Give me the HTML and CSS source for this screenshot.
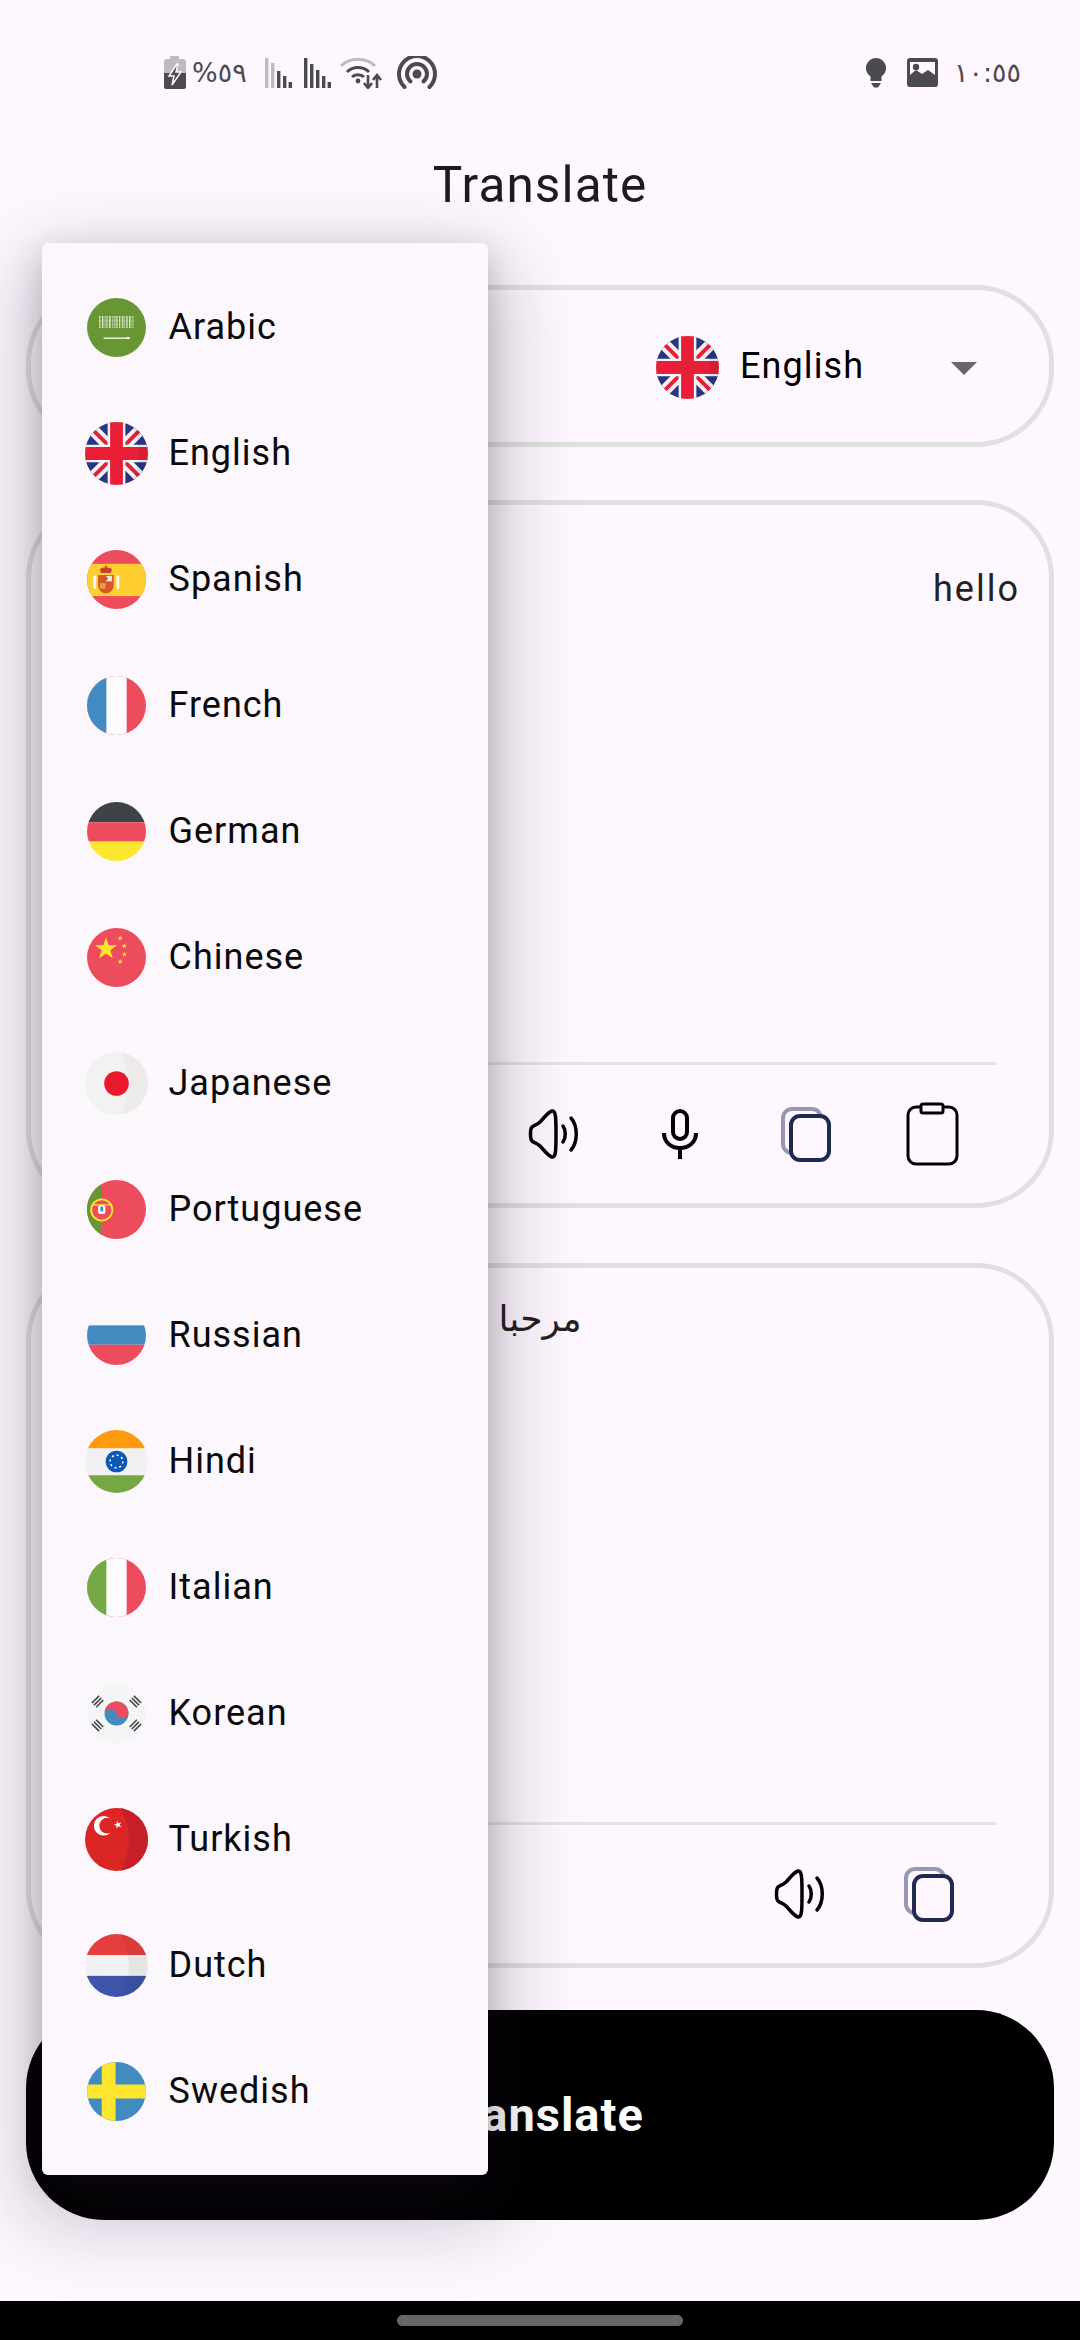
FILE: index.html
```html
<!DOCTYPE html>
<html lang="en">
<head>
<meta charset="utf-8">
<title>Translate</title>
<link rel="stylesheet" href="styles.css">
</head>
<body>
<div class="screen">
  <header class="status">
    <div class="status-group">
      <svg class="si battery" viewBox="0 0 22 33"><path class="g-light" d="M6 0h9v3h4a3 3 0 0 1 3 3v12H0V6a3 3 0 0 1 3-3h3z"/><path class="g-dark" d="M0 17h22v14a2 2 0 0 1-2 2H2a2 2 0 0 1-2-2z"/><path d="M13 8 5 20h5l-2 9 9-13h-5l2-8z" fill="#4b4a4c" stroke="#fef7ff" stroke-width="1.5"/></svg>
      <span class="st-text pct">%٥٩</span>
      <svg class="si signal first" viewBox="0 0 27 30"><rect class="g-light" x="0" y="0" width="3.4" height="30"/><rect class="g-light" x="6" y="5" width="3.4" height="25"/><rect class="g-dark" x="12" y="13" width="3.4" height="17"/><rect class="g-dark" x="18" y="18" width="3.4" height="12"/><rect class="g-dark" x="23.6" y="24" width="3.4" height="6"/></svg>
      <svg class="si signal" viewBox="0 0 27 30"><rect class="g-dark" x="0" y="0" width="3.4" height="30"/><rect class="g-dark" x="6" y="6" width="3.4" height="24"/><rect class="g-dark" x="12" y="12" width="3.4" height="18"/><rect class="g-dark" x="18" y="18" width="3.4" height="12"/><rect class="g-dark" x="23.6" y="24" width="3.4" height="6"/></svg>
      <svg class="si wifi" viewBox="0 0 42 32"><path d="M1 9C10 0 26 0 35 9" fill="none" stroke="#bdbbbe" stroke-width="3"/><path d="M7 15C13 9 23 9 29 15" fill="none" stroke="#4b4a4c" stroke-width="3"/><path d="M12 20C15 17 21 17 24 20" fill="none" stroke="#4b4a4c" stroke-width="3"/><circle cx="18" cy="24" r="2.4" fill="#4b4a4c"/><path d="M28 18v12M24 26l4 5 4-5" fill="none" stroke="#4b4a4c" stroke-width="2.6"/><path d="M37 31V19M33 23l4-5 4 5" fill="none" stroke="#4b4a4c" stroke-width="2.6"/></svg>
      <svg class="si hotspot" viewBox="0 0 40 33"><circle cx="20" cy="18" r="4.500" fill="#4b4a4c"/><path d="M13.500 25.500A10 10 0 1 1 26.500 25.500" fill="none" stroke="#4b4a4c" stroke-width="4" stroke-linecap="round"/><path d="M7.500 31A18 18 0 1 1 32.500 31" fill="none" stroke="#4b4a4c" stroke-width="4" stroke-linecap="round"/></svg>
    </div>
    <div class="status-group right">
      <svg class="si bulb" viewBox="0 0 20 30"><path class="g-dark" d="M10 0a10 10 0 0 1 5.5 18.4V23h-11v-4.600A10 10 0 0 1 10 0z"/><path class="g-dark" d="M5 25h10l-3 4.500H8z"/></svg>
      <svg class="si picture" viewBox="0 0 31 29"><path class="g-dark" fill-rule="evenodd" d="M3 0h25a3 3 0 0 1 3 3v23a3 3 0 0 1-3 3H3a3 3 0 0 1-3-3V3a3 3 0 0 1 3-3zM3 4v13l6-5 6 4 6-4 7 5V4z"/><circle cx="9" cy="9" r="3.200" fill="#4b4a4c"/></svg>
      <span class="st-text time">١٠:٥٥</span>
    </div>
  </header>

  <main class="app">
    <h1 class="title">Translate</h1>

    <section class="selector">
      <div class="lang-pick">
        <svg class="flag big" viewBox="0 0 64 64"><rect width="64" height="64" fill="#2a3580"/><path d="M0 0 64 64M64 0 0 64" stroke="#f4f4f4" stroke-width="12"/><path d="M0 0 64 64M64 0 0 64" stroke="#e81f37" stroke-width="4"/><path d="M32 0V64M0 32H64" stroke="#f4f4f4" stroke-width="18"/><path d="M32 0V64M0 32H64" stroke="#e81f37" stroke-width="13"/><path d="M46 0a64 64 0 0 1 0 64h18V0z" fill="#000" opacity=".07"/></svg>
        <span class="lang-name">English</span>
        <span class="caret"></span>
      </div>
    </section>

    <section class="card source">
      <p class="input-text">hello</p>
      <div class="rule"></div>
      <div class="tools">
        <span class="slot"><svg class="ic speaker" viewBox="0 0 52 50"><path d="M24 2C20 3 16 9 12 13 9 16 6 16 4 18 2 20 2 30 4 32 6 34 9 34 12 37 16 41 20 47 24 48 28 49 28 40 28 25 28 10 28 1 24 2Z"/><path d="M35 17C38 21 38 29 35 33M43 9C50 17 50 33 43 41"/></svg></span>
        <span class="slot"><svg class="ic mic" viewBox="0 0 36 50"><rect x="11" y="2" width="14" height="28" rx="7"/><path class="butt" d="M2 24C2 44 34 44 34 24M18 38V50"/></svg></span>
        <span class="slot"><svg class="ic copy" viewBox="0 0 50 55"><rect class="copy-back" x="2" y="2" width="38" height="44" rx="9"/><rect class="copy-front" x="10" y="9" width="38" height="44" rx="9"/></svg></span>
        <span class="slot"><svg class="ic clip" viewBox="0 0 53 64"><rect class="thin" x="2" y="5" width="49" height="57" rx="8"/><rect class="thin tab" x="15" y="2" width="22" height="9" rx="2"/></svg></span>
      </div>
    </section>

    <section class="card result">
      <p class="output-text" lang="ar">مرحبا</p>
      <div class="rule"></div>
      <div class="tools compact">
        <span class="slot"><svg class="ic speaker" viewBox="0 0 52 50"><path d="M24 2C20 3 16 9 12 13 9 16 6 16 4 18 2 20 2 30 4 32 6 34 9 34 12 37 16 41 20 47 24 48 28 49 28 40 28 25 28 10 28 1 24 2Z"/><path d="M35 17C38 21 38 29 35 33M43 9C50 17 50 33 43 41"/></svg></span>
        <span class="slot"><svg class="ic copy" viewBox="0 0 50 55"><rect class="copy-back" x="2" y="2" width="38" height="44" rx="9"/><rect class="copy-front" x="10" y="9" width="38" height="44" rx="9"/></svg></span>
      </div>
    </section>

    <button class="translate">Translate</button>
  </main>

  <footer class="navbar"><span class="pill"></span></footer>

  <ul class="menu">
    <li class="row">
      <svg class="flag" viewBox="0 0 64 64"><rect width="64" height="64" fill="#699635"/><path d="M13 26H51" stroke="#fff" stroke-width="13" stroke-dasharray=".8 .9 .5 1.300 1 .7 .6 1.500"/><path d="M13 22.500H51M13 27H51M13 30.500H51" stroke="#699635" stroke-width=".8" stroke-dasharray="3 1.500 2 2.500"/><path d="M18 43.500H44" stroke="#fff" stroke-width="1.300"/><path d="M43 42.200h2.500l1.500 1.300-1.500 1.300H43z" fill="#fff"/></svg>
      <span class="lang">Arabic</span>
    </li>
    <li class="row">
      <svg class="flag big" viewBox="0 0 64 64"><rect width="64" height="64" fill="#2a3580"/><path d="M0 0 64 64M64 0 0 64" stroke="#f4f4f4" stroke-width="12"/><path d="M0 0 64 64M64 0 0 64" stroke="#e81f37" stroke-width="4"/><path d="M32 0V64M0 32H64" stroke="#f4f4f4" stroke-width="18"/><path d="M32 0V64M0 32H64" stroke="#e81f37" stroke-width="13"/><path d="M46 0a64 64 0 0 1 0 64h18V0z" fill="#000" opacity=".07"/></svg>
      <span class="lang">English</span>
    </li>
    <li class="row">
      <svg class="flag" viewBox="0 0 64 64"><rect width="64" height="64" fill="#ed4c5c"/><rect y="15" width="64" height="35" fill="#ffce31"/><rect x="7" y="28" width="3" height="14" fill="#fff"/><rect x="32" y="28" width="3" height="14" fill="#fff"/><path d="M14 21c2-3 11-3 13 0l-1 4H15z" fill="#c8412f"/><circle cx="20.500" cy="18" r="1.200" fill="#c8412f"/><path d="M12 27H29V38C29 43 25 47 20.500 47S12 43 12 38z" fill="#d9582b"/><rect x="21" y="28" width="6" height="6" fill="#f4ecd8"/><rect x="14" y="36" width="6" height="6" fill="#e8a13a"/><circle cx="21" cy="31" r="1.500" fill="#c8412f"/></svg>
      <span class="lang">Spanish</span>
    </li>
    <li class="row">
      <svg class="flag" viewBox="0 0 64 64"><rect width="64" height="64" fill="#ed4c5c"/><rect width="43" height="64" fill="#fcfcfc"/><rect width="21" height="64" fill="#428bc1"/></svg>
      <span class="lang">French</span>
    </li>
    <li class="row">
      <svg class="flag" viewBox="0 0 64 64"><rect width="64" height="22" fill="#3e4347"/><rect y="22" width="64" height="21" fill="#ed4c5c"/><rect y="43" width="64" height="21" fill="#ffe62e"/></svg>
      <span class="lang">German</span>
    </li>
    <li class="row">
      <svg class="flag" viewBox="0 0 64 64"><defs><polygon id="star" points="0,-10 2.350,-3.240 9.510,-3.090 3.800,1.240 5.880,8.090 0,4 -5.880,8.090 -3.800,1.240 -9.510,-3.090 -2.350,-3.240"/></defs><rect width="64" height="64" fill="#ed4c5c"/><g fill="#ffe62e"><use href="#star" transform="translate(20.600 22.700) scale(1.250)"/><use href="#star" transform="translate(36 11) scale(.3)"/><use href="#star" transform="translate(40.500 19.500) scale(.3)"/><use href="#star" transform="translate(40.500 28.500) scale(.3)"/><use href="#star" transform="translate(36 36.500) scale(.3)"/></g></svg>
      <span class="lang">Chinese</span>
    </li>
    <li class="row">
      <svg class="flag big" viewBox="0 0 64 64"><rect width="64" height="64" fill="#f2f2f2"/><path d="M36 0a64 64 0 0 1 0 64h28V0z" fill="#ecebe9"/><circle cx="32" cy="32" r="12.500" fill="#e8192c"/></svg>
      <span class="lang">Japanese</span>
    </li>
    <li class="row">
      <svg class="flag" viewBox="0 0 64 64"><rect width="64" height="64" fill="#ed4c5c"/><rect width="15.500" height="64" fill="#699635"/><circle cx="16" cy="32.500" r="11.500" fill="#ed4c5c" stroke="#ffe62e" stroke-width="2"/><path d="M6 27H26" stroke="#ffe62e" stroke-width="1.200"/><rect x="12" y="27" width="8" height="10" rx="2.500" fill="#f4f4f4"/><rect x="14.500" y="29" width="3" height="5" fill="#428bc1"/></svg>
      <span class="lang">Portuguese</span>
    </li>
    <li class="row">
      <svg class="flag" viewBox="0 0 64 64"><rect width="64" height="21" fill="#f9f9f9"/><rect y="21" width="64" height="21" fill="#428bc1"/><rect y="42" width="64" height="22" fill="#ed4c5c"/></svg>
      <span class="lang">Russian</span>
    </li>
    <li class="row">
      <svg class="flag big" viewBox="0 0 64 64"><rect width="64" height="64" fill="#f1f1f1"/><rect width="64" height="18.500" fill="#ff9a0f"/><rect y="46" width="64" height="18" fill="#75a843"/><circle cx="32" cy="32" r="11" fill="#0d57b5"/><circle cx="32" cy="32" r="6.500" fill="none" stroke="#fff" stroke-width="1.600" stroke-dasharray="2 3"/></svg>
      <span class="lang">Hindi</span>
    </li>
    <li class="row">
      <svg class="flag" viewBox="0 0 64 64"><rect width="64" height="64" fill="#ed4c5c"/><rect width="43" height="64" fill="#fcfcfc"/><rect width="21" height="64" fill="#75a843"/></svg>
      <span class="lang">Italian</span>
    </li>
    <li class="row">
      <svg class="flag" viewBox="0 0 64 64"><defs><path id="tri" d="M-5.500-3.200H5.500M-5.500 0H5.500M-5.500 3.200H5.500"/></defs><rect width="64" height="64" fill="#f5f5f5"/><circle cx="32" cy="32" r="13" fill="#428bc1"/><path d="M19 32a13 13 0 0 1 26 0c0 3-3 5-6.500 5S33 35 32 32s-3-5-6.500-5S19 29 19 32z" fill="#ed4c5c"/><g stroke="#3e4347" stroke-width="1.700"><use href="#tri" transform="translate(11.500 19) rotate(-45)"/><use href="#tri" transform="translate(52.500 19) rotate(45)"/><use href="#tri" transform="translate(11.500 45) rotate(45)"/><use href="#tri" transform="translate(52.500 45) rotate(-45)"/></g></svg>
      <span class="lang">Korean</span>
    </li>
    <li class="row">
      <svg class="flag big" viewBox="0 0 64 64"><defs><polygon id="star2" points="0,-10 2.350,-3.240 9.510,-3.090 3.800,1.240 5.880,8.090 0,4 -5.880,8.090 -3.800,1.240 -9.510,-3.090 -2.350,-3.240"/></defs><rect width="64" height="64" fill="#dc2626"/><path d="M36 0a64 64 0 0 1 0 64h28V0z" fill="#c71f27"/><circle cx="19" cy="18" r="10" fill="#fff"/><circle cx="22.500" cy="18" r="8" fill="#dc2626"/><use href="#star2" transform="translate(33.500 17) rotate(-15) scale(.42)" fill="#fff"/></svg>
      <span class="lang">Turkish</span>
    </li>
    <li class="row">
      <svg class="flag big" viewBox="0 0 64 64"><rect width="64" height="21.500" fill="#e53e3e"/><rect y="21.500" width="64" height="21" fill="#f1f1f1"/><rect y="42.500" width="64" height="21.500" fill="#3c55a8"/><path d="M36 0a64 64 0 0 1 0 64h28V0z" fill="#000" opacity=".05"/></svg>
      <span class="lang">Dutch</span>
    </li>
    <li class="row">
      <svg class="flag" viewBox="0 0 64 64"><rect width="64" height="64" fill="#428bc1"/><path d="M16 0H31V64H16zM0 24.500H64V39.500H0z" fill="#ffe62e"/></svg>
      <span class="lang">Swedish</span>
    </li>
  </ul>
</div>
</body>
</html>
```
FILE: styles.css
```css
* { box-sizing: border-box; }
html, body { margin: 0; padding: 0; }
body { background: #fef7ff; font-family: Roboto, "DejaVu Sans", sans-serif; }

.screen {
  position: relative;
  width: 1080px;
  height: 2340px;
  display: flex;
  flex-direction: column;
  overflow: hidden;
  background: #fef7ff;
}

/* status bar */
.status {
  height: 145px;
  flex: none;
  display: flex;
  align-items: center;
  justify-content: space-between;
  padding: 0 59px 0 164px;
}
.status-group { display: flex; align-items: center; }
.si { display: block; flex: none; }
.g-light { fill: #bdbbbe; }
.g-dark { fill: #4b4a4c; }
.st-text {
  font-family: "DejaVu Sans", sans-serif;
  color: #4b4a4c;
  font-size: 27px;
  line-height: 32px;
  direction: ltr;
  unicode-bidi: bidi-override;
}
.battery { width: 22px; height: 33px; }
.pct { margin-left: 6px; width: 73px; letter-spacing: .8px; }
.signal { width: 27px; height: 30px; }
.signal.first { margin-right: 12px; }
.wifi { width: 42px; height: 32px; margin-left: 9px; }
.hotspot { width: 40px; height: 33px; margin-left: 15px; }
.bulb { width: 20px; height: 30px; }
.picture { width: 31px; height: 29px; margin-left: 21px; }
.time { margin-left: 16px; letter-spacing: -3px; }

/* app body */
.app {
  flex: 1;
  display: flex;
  flex-direction: column;
  padding: 0 26px;
}
.title {
  margin: 0;
  height: 81px;
  flex: none;
  font-weight: 400;
  font-size: 49.500px;
  line-height: 81px;
  letter-spacing: 1.100px;
  text-align: center;
  color: #1d1b20;
}
.selector {
  margin-top: 59px;
  height: 162px;
  flex: none;
  border: 5px solid #e0e0e0;
  border-radius: 78px;
  display: flex;
  justify-content: flex-end;
  align-items: center;
  padding-right: 72px;
}
.lang-pick { display: flex; align-items: center; width: 321px; margin-top: 2px; }
.lang-name { margin-left: 21px; font-size: 36px; letter-spacing: 1.100px; color: #000; line-height: 44px; margin-top: -3px; }
.caret {
  margin-left: auto;
  width: 0;
  height: 0;
  margin-top: 3px;
  border-left: 13px solid transparent;
  border-right: 13px solid transparent;
  border-top: 13px solid #666;
}

.flag {
  display: block;
  flex: none;
  width: 59px;
  height: 59px;
  margin: 2px;
  border-radius: 50%;
}
.flag.big { width: 63px; height: 63px; margin: 0; }

.card {
  flex: none;
  border: 5px solid #e0e0e0;
  border-radius: 78px;
  display: flex;
  flex-direction: column;
}
.source { margin-top: 53px; height: 708px; }
.result { margin-top: 55px; height: 705px; }

.input-text {
  margin: 63px 0 0;
  flex: 1;
  padding-right: 29px;
  text-align: right;
  font-size: 36px;
  line-height: 42px;
  letter-spacing: 2px;
  color: #222;
}
.output-text {
  margin: 30px 0 0;
  flex: 1;
  text-align: center;
  font-family: "DejaVu Sans", sans-serif;
  font-size: 36px;
  line-height: 42px;
  color: #222;
}
.rule { height: 3px; margin: 0 53px; background: #e3e2e5; flex: none; }
.tools {
  flex: none;
  height: 138px;
  display: flex;
  justify-content: flex-end;
  padding-right: 54px;
}
.tools.compact { padding-right: 56px; }
.slot { width: 126px; display: flex; align-items: center; justify-content: center; }
.tools.compact .slot { width: 129px; }

.ic { display: block; fill: none; stroke: #000; stroke-width: 3.500; stroke-linecap: round; stroke-linejoin: round; }
.ic .butt { stroke-linecap: butt; stroke-width: 4; }
.speaker { width: 52px; height: 50px; }
.mic { width: 36px; height: 50px; }
.mic rect { stroke-width: 4; }
.copy { width: 50px; height: 55px; }
.copy-back { stroke: #9599b3; stroke-width: 4; }
.copy-front { stroke: #1f2a52; stroke-width: 4; fill: #fef7ff; }
.clip { width: 53px; height: 64px; }
.clip .thin { stroke-width: 3; }
.clip .tab { fill: #fef7ff; }

.translate {
  margin-top: 42px;
  height: 210px;
  flex: none;
  border: 0;
  padding: 0 0 2px;
  border-radius: 78px;
  background: #000;
  color: #fff;
  font-family: Roboto, sans-serif;
  font-weight: 700;
  font-size: 47px;
  letter-spacing: 1px;
}

.navbar {
  flex: none;
  height: 39px;
  background: #000;
  display: flex;
  justify-content: center;
  align-items: flex-start;
  padding-top: 14px;
}
.pill { width: 286px; height: 11px; border-radius: 6px; background: #666; }

/* dropdown overlay */
.menu {
  position: absolute;
  top: 243px;
  left: 42px;
  width: 446px;
  margin: 0;
  padding: 21px 0;
  list-style: none;
  background: #fcf6fd;
  border-radius: 6px;
  box-shadow: 0 30px 80px 12px rgba(30, 20, 40, .26), 0 10px 30px rgba(30, 20, 40, .18);
}
.row {
  height: 126px;
  display: flex;
  align-items: center;
  padding-left: 42.500px;
}
.lang {
  margin-left: 21px;
  font-size: 36px;
  line-height: 44px;
  letter-spacing: 1px;
  color: #0a0a0a;
  margin-top: -1px;
}
```
